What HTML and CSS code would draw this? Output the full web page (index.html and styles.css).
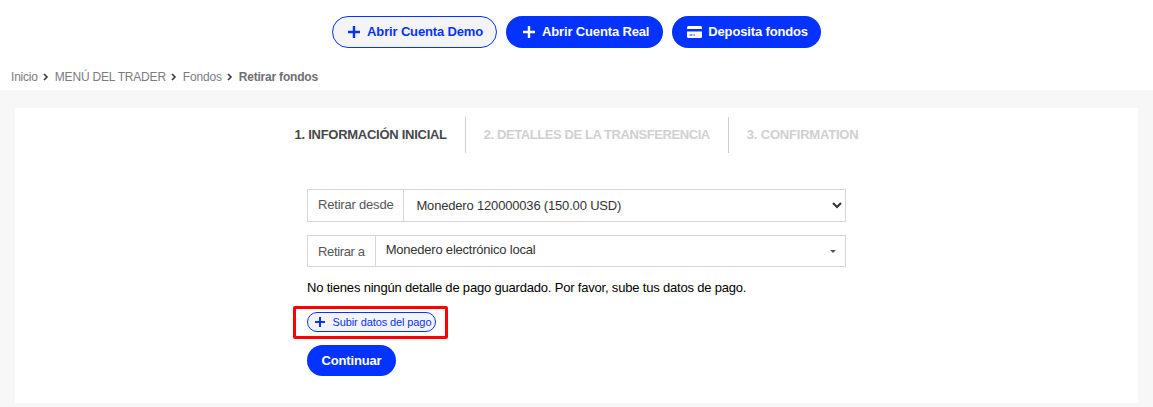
FILE: index.html
```html
<!DOCTYPE html>
<html lang="es">
<head>
<meta charset="utf-8">
<title>Retirar fondos</title>
<link rel="stylesheet" href="styles.css">
</head>
<body>
<header class="top-actions">
  <a class="btn btn-outline"><svg class="icon-plus" viewBox="0 0 12 12"><path d="M6 0v12M0 6h12"/></svg>Abrir Cuenta Demo</a>
  <a class="btn btn-solid btn-real"><svg class="icon-plus" viewBox="0 0 12 12"><path d="M6 0v12M0 6h12"/></svg>Abrir Cuenta Real</a>
  <a class="btn btn-solid btn-deposit"><svg class="icon-card" viewBox="0 0 15 12"><path fill-rule="evenodd" d="M1.5 0h12A1.5 1.5 0 0 1 15 1.500V10.500A1.500 1.500 0 0 1 13.500 12H1.500A1.500 1.500 0 0 1 0 10.500V1.500A1.500 1.500 0 0 1 1.500 0ZM0 3v2.500h15V3ZM2.500 8.500v1h3v-1ZM6.500 8.500v1h1.500v-1Z"/></svg>Deposita fondos</a>
</header>
<nav class="breadcrumb">
  <a>Inicio</a><svg class="chev" viewBox="0 0 6 8"><path d="M1 1l3 3-3 3"/></svg>
  <a>MENÚ DEL TRADER</a><svg class="chev" viewBox="0 0 6 8"><path d="M1 1l3 3-3 3"/></svg>
  <a>Fondos</a><svg class="chev" viewBox="0 0 6 8"><path d="M1 1l3 3-3 3"/></svg>
  <strong>Retirar fondos</strong>
</nav>
<main class="panel">
  <section class="card">
    <ol class="steps">
      <li class="step active">1. INFORMACIÓN INICIAL</li>
      <li class="step">2. DETALLES DE LA TRANSFERENCIA</li>
      <li class="step">3. CONFIRMATION</li>
    </ol>
    <form class="form">
      <div class="field field-first">
        <label class="field-label">Retirar desde</label>
        <select class="native-select"><option>Monedero 120000036 (150.00 USD)</option></select>
      </div>
      <div class="field field-second">
        <label class="field-label">Retirar a</label>
        <div class="fake-select"><span>Monedero electrónico local</span><i class="caret"></i></div>
      </div>
      <p class="notice">No tienes ningún detalle de pago guardado. Por favor, sube tus datos de pago.</p>
      <div class="highlight">
        <a class="btn-small"><svg class="icon-plus-small" viewBox="0 0 10 10"><path d="M5 0v10M0 5h10"/></svg>Subir datos del pago</a>
      </div>
      <button type="button" class="btn-continue">Continuar</button>
    </form>
  </section>
</main>
</body>
</html>
```
FILE: styles.css
```css
* { box-sizing: border-box; }
html, body { margin: 0; padding: 0; }
body {
  width: 1153px;
  height: 407px;
  overflow: hidden;
  background: #fff;
  font-family: "Liberation Sans", Arial, sans-serif;
  color: #000;
}
.top-actions {
  display: flex;
  justify-content: center;
  gap: 9px;
  padding-top: 16px;
  height: 48px;
}
.btn {
  display: inline-flex;
  align-items: center;
  height: 32px;
  padding: 0 13px 1px 15px;
  border-radius: 16px;
  font-size: 13px;
  font-weight: 700;
  letter-spacing: -0.15px;
  white-space: nowrap;
}
.btn-outline {
  background: #f4f4f6;
  border: 1px solid #0433ff;
  color: #0433ff;
}
.btn-solid {
  background: #0433ff;
  color: #fff;
}
.btn-real { padding-left: 17px; padding-right: 14px; }
.btn-deposit { padding-left: 15px; padding-right: 13px; }
.btn-deposit svg { margin-right: 6px; }
.icon-plus {
  width: 12px;
  height: 12px;
  margin-right: 7px;
  fill: none;
  stroke: currentColor;
  stroke-width: 2.4;
}
.icon-card {
  width: 15px;
  height: 12px;
  fill: currentColor;
}
.breadcrumb {
  display: flex;
  align-items: center;
  height: 42px;
  padding: 16px 0 0 11px;
  font-size: 12px;
  letter-spacing: -0.2px;
  color: #7b7b80;
}
.breadcrumb strong { font-weight: 700; color: #6f6f72; }
.chev {
  width: 6px;
  height: 8px;
  margin: 0 5.5px;
  fill: none;
  stroke: #333;
  stroke-width: 1.5;
}
.panel {
  background: #f7f7f7;
  height: 317px;
  padding: 18px 15px 0;
}
.card {
  background: #fff;
  height: 295px;
}
.steps {
  list-style: none;
  margin: 0;
  padding: 9px 0 0;
  display: flex;
  justify-content: center;
  height: 45px;
}
.step {
  display: flex;
  align-items: center;
  height: 36px;
  padding: 0 18px 2px;
  font-size: 13px;
  font-weight: 700;
  letter-spacing: -0.42px;
  color: #d0d0d2;
  border-right: 1px solid #cfcfcf;
}
.step:last-child { border-right: 0; letter-spacing: -0.2px; }
.step.active { color: #47474b; letter-spacing: -0.27px; }
.form {
  margin: 36px 0 0 292px;
  width: 539px;
}
.field {
  display: flex;
  border: 1px solid #d5d5da;
  background: #fff;
}
.field-first { height: 33px; }
.field-second { height: 32px; margin-top: 13px; }
.field-label {
  display: flex;
  align-items: center;
  padding: 0 10px;
  font-size: 13px;
  letter-spacing: -0.2px;
  color: #555;
  border-right: 1px solid #d5d5da;
  white-space: nowrap;
}
.field-first .field-label { padding-bottom: 2px; }
.field-second .field-label { letter-spacing: -0.35px; }
.native-select {
  flex: 1;
  min-width: 0;
  border: 0;
  background: #fff;
  padding: 0 4px 0 8px;
  font-family: "Liberation Sans", Arial, sans-serif;
  font-size: 13px;
  letter-spacing: -0.18px;
  color: #333;
  outline: 0;
}
.fake-select {
  flex: 1;
  display: flex;
  align-items: center;
  justify-content: space-between;
  padding: 0 9px 3px 10px;
  font-size: 13px;
  letter-spacing: -0.22px;
  color: #333;
}
.caret {
  width: 0;
  height: 0;
  margin-top: 3px;
  border: 3px solid transparent;
  border-top: 3px solid #555;
  border-bottom: 0;
}
.notice {
  margin: 14px 0 0;
  font-size: 13px;
  letter-spacing: -0.19px;
  line-height: 14px;
  color: #000;
  white-space: nowrap;
}
.highlight {
  display: flex;
  align-items: center;
  width: 155px;
  height: 33px;
  margin: 11px 0 0 -14px;
  padding: 0 0 1px 11px;
  border: 3px solid #f00;
  border-radius: 2px;
}
.btn-small {
  display: inline-flex;
  align-items: center;
  height: 20px;
  width: 129px;
  padding-left: 7px;
  border: 1px solid #0433ff;
  border-radius: 10px;
  background: #f4f4f6;
  color: #0433ff;
  font-size: 11px;
  letter-spacing: -0.1px;
  white-space: nowrap;
}
.icon-plus-small {
  width: 10px;
  height: 10px;
  margin-right: 7.5px;
  fill: none;
  stroke: currentColor;
  stroke-width: 2;
}
.btn-continue {
  display: block;
  width: 89px;
  height: 31px;
  margin-top: 6px;
  padding: 0;
  border: 0;
  border-radius: 16px;
  background: #0433ff;
  color: #fff;
  font-family: "Liberation Sans", Arial, sans-serif;
  font-size: 13px;
  font-weight: 700;
  letter-spacing: -0.15px;
}
```
